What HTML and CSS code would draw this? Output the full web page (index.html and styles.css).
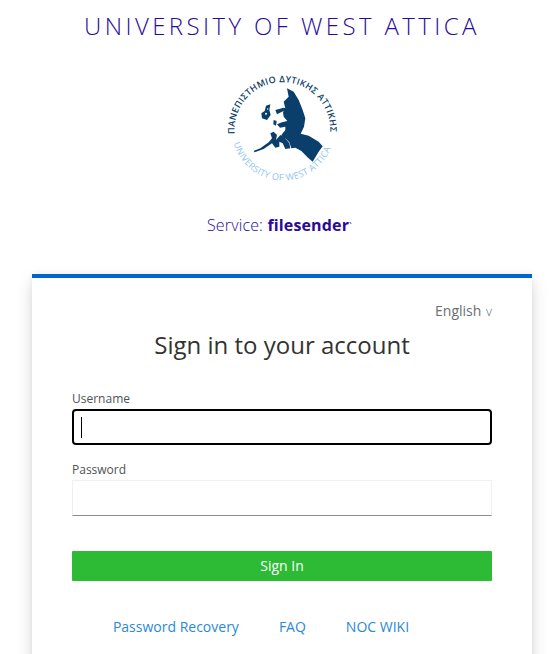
FILE: index.html
```html
<!DOCTYPE html>
<html lang="en">
<head>
    <meta charset="UTF-8">
    <meta name="viewport" content="width=device-width, initial-scale=1.0">
    <title>University of West Attica - Sign in</title>
    <link rel="stylesheet" href="styles.css">
</head>
<body>

    <div class="page">
        <div class="brand">
            <div class="brand-title">UNIVERSITY OF WEST ATTICA</div>

            <!-- Logo: circular text + island shape -->
            <svg class="logo" viewBox="0 0 480 390" width="160" height="130">
                <defs>
                    <path id="arc-top" d="M 98 222 A 143.5 143.5 0 1 1 384 222"></path>
                    <path id="arc-bottom" d="M 95 250 A 154 154 0 0 0 391 250"></path>
                </defs>
                <text class="logo-gr"><textPath href="#arc-top">ΠΑΝΕΠΙΣΤΗΜΙΟ ΔΥΤΙΚΗΣ ΑΤΤΙΚΗΣ</textPath></text>
                <text class="logo-en"><textPath href="#arc-bottom">UNIVERSITY OF WEST ATTICA</textPath></text>
                <g class="logo-shape" transform="translate(150 75)">
                    <path d="M105 10 L125 20 L140 45 L152 75 L160 100 L156 125 L146 146 L170 152 L200 170 L212 184 L200 200 L182 230 L168 218 L148 198 L130 188 L118 190 L112 172 L100 160 L90 160 L88 150 L100 135 L100 125 L84 128 L75 118 L90 112 L106 108 L95 95 L93 82 L100 70 L95 50 L110 35 Z"></path>
                    <path d="M5 198 L25 190 L50 172 L60 160 L55 145 L65 140 L75 150 L72 165 L85 150 L100 160 L112 175 L115 190 L100 192 L92 175 L82 170 L82 185 L70 188 L60 175 L35 192 L8 202 Z"></path>
                    <path d="M42 62 L55 58 L52 75 L56 90 L45 105 L30 100 L28 85 L38 78 Z"></path>
                    <path d="M70 75 L95 68 L108 72 L90 80 L75 88 Z"></path>
                    <path d="M65 105 L74 108 L72 122 L64 118 Z"></path>
                    <circle class="logo-hole" cx="42" cy="86" r="3"></circle>
                    <circle class="logo-hole" cx="47" cy="72" r="2"></circle>
                </g>
            </svg>

            <div class="service">Service: <strong>filesender</strong><span class="service-tick">`</span></div>
        </div>

        <div class="card">
            <div class="lang">English <span class="lang-arrow">v</span></div>
            <h1>Sign in to your account</h1>

            <form method="post" action=".">
                <label class="field-label">Username</label>
                <div class="field field-focus"><span class="caret"></span></div>

                <label class="field-label" for="password">Password</label>
                <input class="field" id="password" name="password" type="password">

                <input class="submit" type="submit" value="Sign In">
            </form>

            <div class="links">
                <a href="#">Password Recovery</a>
                <a href="#">FAQ</a>
                <a href="#">NOC WIKI</a>
            </div>
        </div>
    </div>

</body>
</html>
```

FILE: styles.css
```css
html, body {
    height: 100%;
    overflow: hidden;
}

body {
    font-family: 'Open Sans', sans-serif;
    background-color: #ffffff;
    margin: 0;
    padding: 0;
}

.page {
    width: 500px;
    margin-left: 32px;
}

.brand {
    display: flex;
    flex-direction: column;
    align-items: center;
    color: #2a0a96;
}

.brand-title {
    font-size: 24px;
    font-weight: 350;
    line-height: 33px;
    letter-spacing: 3.4px;
    margin-top: 9px;
    white-space: pre;
}

.logo {
    display: block;
    margin-top: 18px;
}

.logo-gr {
    font-family: 'Open Sans', sans-serif;
    font-size: 27px;
    font-weight: 600;
    letter-spacing: 1px;
    fill: #0b3f6b;
}

.logo-en {
    font-family: 'Open Sans', sans-serif;
    font-size: 27px;
    letter-spacing: 0.8px;
    fill: #8fc4ec;
}

.logo-shape {
    fill: #0b3f6b;
}

.logo-hole {
    fill: #ffffff;
}

.service {
    font-size: 16px;
    font-weight: 350;
    letter-spacing: 0.15px;
    line-height: 22px;
    margin-top: 24px;
    margin-right: 5px;
}

.service strong {
    font-weight: 700;
}

.service-tick {
    font-size: 10px;
    font-weight: 400;
}

.card {
    margin-top: 36px;
    height: 420px;
    padding: 23px 40px 0;
    background-color: #ffffff;
    border-top: 4px solid #0066cc;
    box-shadow: 0 8px 16px rgba(0, 0, 0, 0.15), 0 0 6px rgba(0, 0, 0, 0.06);
}

.lang {
    font-size: 14px;
    line-height: 19px;
    color: #6a6e73;
    text-align: right;
}

.lang-arrow {
    font-size: 13px;
    font-weight: 300;
    margin-left: 1px;
}

h1 {
    font-size: 24px;
    font-weight: 400;
    line-height: 33px;
    color: #333333;
    text-align: center;
    margin: 7px 0 0;
}

.field-label {
    display: block;
    font-size: 12px;
    line-height: 16px;
    color: #4f5255;
    margin-bottom: 2px;
}

form .field-label:first-child {
    margin-top: 30px;
}

.field {
    display: block;
    width: 100%;
    height: 36px;
    margin: 0 0 20px;
    padding: 0;
    background-color: #ffffff;
    border: 1px solid #f0f0f0;
    border-bottom-color: #8a8d90;
    border-radius: 0;
    box-sizing: border-box;
}

.field-focus {
    display: flex;
    align-items: center;
    padding-left: 7px;
    border: 2px solid #000000;
    border-radius: 4px;
    margin-top: 0;
    margin-bottom: 17px;
}

.caret {
    width: 1px;
    height: 21px;
    background-color: #000000;
}

.submit {
    display: block;
    width: 100%;
    height: 30px;
    margin-top: 35px;
    padding: 0 0 2px;
    background-color: #2dbb35;
    color: white;
    border: none;
    border-radius: 1px;
    font-family: 'Open Sans', sans-serif;
    font-size: 14px;
}

.links {
    display: flex;
    justify-content: center;
    gap: 40px;
    margin-top: 36px;
    margin-right: 42px;
    font-size: 14px;
    line-height: 19px;
}

.links a {
    color: #2b88d8;
    text-decoration: none;
}
```
